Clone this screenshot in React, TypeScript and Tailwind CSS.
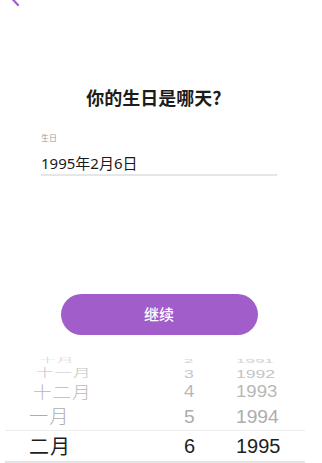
import React from "react";

type Row = {
  month: string;
  day: string;
  year: string;
  h: string;
  color: string;
  monthPad: string;
  squash: string;
};

// wheel rows above the selected one, top to bottom (they shrink as they turn away)
const rows: Row[] = [
  { month: "十月", day: "2", year: "1991", h: "h-[11px]", color: "text-[#d2d2d2]", monthPad: "pl-[39px]", squash: "scale-y-[0.3] scale-x-[0.85]" },
  { month: "十一月", day: "3", year: "1992", h: "h-[15px]", color: "text-[#c4c4c4]", monthPad: "pl-[36px]", squash: "scale-y-[0.55] scale-x-[0.88]" },
  { month: "十二月", day: "4", year: "1993", h: "h-[22px]", color: "text-[#b8b8b8]", monthPad: "pl-[33px]", squash: "scale-y-[0.78] scale-x-[0.93]" },
  { month: "一月", day: "5", year: "1994", h: "h-[27px]", color: "text-[#adadad]", monthPad: "pl-[29px]", squash: "scale-y-[0.9] scale-x-[0.96]" },
];

function PickerRow({ row }: { row: Row }) {
  return (
    <div className={`flex items-center ${row.h} ${row.color} text-[20px] leading-none`}>
      <div className={`w-[184px] ${row.monthPad}`}>
        <span className={`inline-block origin-left ${row.squash} font-['Noto_Sans_CJK_SC',sans-serif] font-light tracking-[1px]`}>
          {row.month}
        </span>
      </div>
      <div className="w-[52px]">
        <span className={`inline-block origin-left ${row.squash}`}>{row.day}</span>
      </div>
      <div className="flex-1">
        <span className={`inline-block origin-left ${row.squash}`}>{row.year}</span>
      </div>
    </div>
  );
}

export default function App() {
  return (
    <div className="w-[322px] h-[463px] overflow-hidden bg-white flex flex-col font-['Liberation_Sans','Noto_Sans_CJK_SC',sans-serif]">
      <svg width="24" height="8" viewBox="0 0 24 8" className="block shrink-0">
        <path d="M12.5 -1 L18 5" stroke="#a25ec9" strokeWidth="2.2" strokeLinecap="round" fill="none" />
      </svg>

      <h1 className="mt-[77px] pr-[14px] text-center text-[18px] leading-[24px] font-bold text-[#1c1c1c] font-['Noto_Sans_CJK_SC',sans-serif]">
        你的生日是哪天?
      </h1>

      <div className="ml-[41px] w-[236px] flex flex-col">
        <span className="mt-[23px] text-[8px] leading-[12px] text-[#9a9a9a] font-['Noto_Sans_CJK_SC',sans-serif]">
          生日
        </span>
        <span className="mt-[9px] text-[15px] leading-[20px] text-[#1a1a1a] font-['Noto_Sans','Noto_Sans_CJK_SC',sans-serif]">
          1995年2月6日
        </span>
        <div className="mt-[1px] h-[2px] bg-[#e6e6e6]" />

        <button className="mt-[118px] mx-auto w-[197px] h-[41px] rounded-full bg-[#a15dca] text-white text-[15px] font-medium font-['Noto_Sans_CJK_SC',sans-serif]">
          继续
        </button>
      </div>

      <div className="mt-[20px] flex flex-col font-['Liberation_Sans',sans-serif]">
        {rows.map((r) => (
          <PickerRow key={r.year} row={r} />
        ))}
        <div className="ml-[5px] w-[300px] h-px bg-[#ededed]" />
        <div className="flex items-center h-[30px] text-[20px] leading-none text-[#1e1e1e]">
          <div className="w-[184px] pl-[29px]">
            <span className="font-['Noto_Sans_CJK_SC',sans-serif] tracking-[1px]">二月</span>
          </div>
          <div className="w-[52px]">6</div>
          <div className="flex-1">1995</div>
        </div>
        <div className="ml-[5px] w-[300px] h-[2px] bg-[#e4e4e4]" />
      </div>
    </div>
  );
}
